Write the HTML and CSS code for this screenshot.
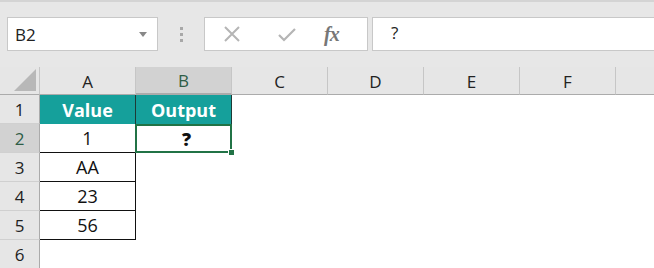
FILE: index.html
```html
<!DOCTYPE html>
<html>
<head>
<meta charset="utf-8">
<link rel="stylesheet" href="styles.css">
</head>
<body>
<div class="app">
  <div class="toolbar">
    <div class="namebox">
      <span class="name">B2</span>
      <svg class="caret" width="8" height="5" viewBox="0 0 8 5"><path d="M0 0H8L4 5Z" fill="#888"/></svg>
    </div>
    <div class="dots"><i></i><i></i><i></i></div>
    <div class="fbtns">
      <svg class="ico" width="20" height="18" viewBox="0 0 20 18"><path d="M3 2L17 16M17 2L3 16" stroke="#b5b5b5" stroke-width="2" fill="none"/></svg>
      <svg class="ico" width="20" height="18" viewBox="0 0 20 18"><path d="M2 10L7 15L18 4" stroke="#b5b5b5" stroke-width="2.2" fill="none"/></svg>
      <span class="fx">fx</span>
    </div>
    <div class="finput">?</div>
  </div>
  <div class="sheet">
    <div class="corner"><svg width="22" height="22" viewBox="0 0 22 22"><path d="M22 0V22H0Z" fill="#b8b8b8"/></svg></div>
    <div class="ch">A</div>
    <div class="ch sel">B</div>
    <div class="ch">C</div>
    <div class="ch">D</div>
    <div class="ch">E</div>
    <div class="ch">F</div>
    <div class="ch last"></div>

    <div class="rh">1</div>
    <div class="c head bl">Value</div>
    <div class="c head bl">Output</div>
    <div class="c"></div><div class="c"></div><div class="c"></div><div class="c"></div><div class="c"></div>

    <div class="rh sel">2</div>
    <div class="c bd">1</div>
    <div class="c active"><b>?</b><span class="handle"></span></div>
    <div class="c"></div><div class="c"></div><div class="c"></div><div class="c"></div><div class="c"></div>

    <div class="rh">3</div>
    <div class="c bd">AA</div>
    <div class="c"></div><div class="c"></div><div class="c"></div><div class="c"></div><div class="c"></div><div class="c"></div>

    <div class="rh">4</div>
    <div class="c bd">23</div>
    <div class="c"></div><div class="c"></div><div class="c"></div><div class="c"></div><div class="c"></div><div class="c"></div>

    <div class="rh">5</div>
    <div class="c bd">56</div>
    <div class="c"></div><div class="c"></div><div class="c"></div><div class="c"></div><div class="c"></div><div class="c"></div>

    <div class="rh">6</div>
    <div class="c"></div><div class="c"></div><div class="c"></div><div class="c"></div><div class="c"></div><div class="c"></div><div class="c"></div>
  </div>
</div>
</body>
</html>
```
FILE: styles.css
```css
* { box-sizing: border-box; }
html, body { margin: 0; padding: 0; }
body { width: 654px; height: 268px; overflow: hidden; background: #fff; font-family: "Open Sans", "Noto Sans", sans-serif; }
.app { width: 654px; height: 268px; }
.toolbar {
  height: 67px;
  background: #e7e7e7;
  border-top: 2px solid #d4d4d4;
  padding: 15px 0 0 7px;
  display: flex;
  align-items: flex-start;
}
.namebox {
  width: 151px; height: 34px;
  background: #fff;
  border: 1px solid #c8c8c8;
  display: flex; align-items: center; justify-content: space-between;
  padding: 0 10px 0 7px;
}
.name { font-size: 17px; color: #222; }
.caret { margin-top: 1px; }
.dots { width: 46px; height: 34px; display: flex; flex-direction: column; align-items: center; justify-content: center; gap: 3px; }
.dots i { display: block; width: 3px; height: 3px; background: #a8a8a8; }
.fbtns {
  width: 164px; height: 34px;
  background: #fff;
  border: 1px solid #c8c8c8;
  display: flex; align-items: center;
  padding-left: 17px;
  gap: 35px;
}
.fbtns .ico { flex: none; }
.fx { font-family: "Liberation Serif", serif; font-style: italic; font-weight: bold; font-size: 20px; color: #777; margin-left: -8px; letter-spacing: -1px; }
.finput {
  margin-left: 4px;
  flex: 1; height: 34px;
  background: #fff;
  border: 1px solid #c8c8c8;
  border-right: none;
  font-size: 17px; color: #222;
  padding: 3px 0 0 18px;
}
.sheet {
  display: grid;
  grid-template-columns: 40px 96px 96px 96px 96px 96px 96px 38px;
  grid-template-rows: 28px 29px 29px 29px 29px 29px 29px;
}
.corner { background: #e6e6e6; border-right: 1px solid #c6c6c6; border-bottom: 1px solid #ababab; display: flex; align-items: flex-end; justify-content: flex-end; padding: 0 3px 3px 0; }
.ch {
  background: #e6e6e6;
  border-right: 1px solid #c6c6c6;
  border-bottom: 1px solid #ababab;
  font-size: 17px; color: #222;
  display: flex; align-items: center; justify-content: center;
  padding-top: 1px;
}
.ch.last { border-right: none; }
.ch.sel { background: #d2d2d2; color: #2e5d46; border-bottom: 2px solid #ababab; }
.rh {
  background: #e6e6e6;
  border-right: 1px solid #ababab;
  border-bottom: 1px solid #d0d0d0;
  font-size: 17px; color: #222;
  display: flex; align-items: center; justify-content: center;
}
.rh.sel { background: #d2d2d2; color: #2e5d46; }
.c {
  font-size: 18px; color: #111;
  display: flex; align-items: center; justify-content: center;
  position: relative;
}
.head { background: #15a09b; color: #fff; font-weight: bold; }
.bl { border-right: 1px solid #1e3a36; }
.bd { border-right: 1px solid #111; border-bottom: 1px solid #111; }
.active { border: 2px solid #217346; margin-left: -1px; font-weight: bold; padding-left: 6px; }
.handle { position: absolute; right: -5px; bottom: -5px; width: 7px; height: 7px; background: #217346; border: 1px solid #fff; }
```
